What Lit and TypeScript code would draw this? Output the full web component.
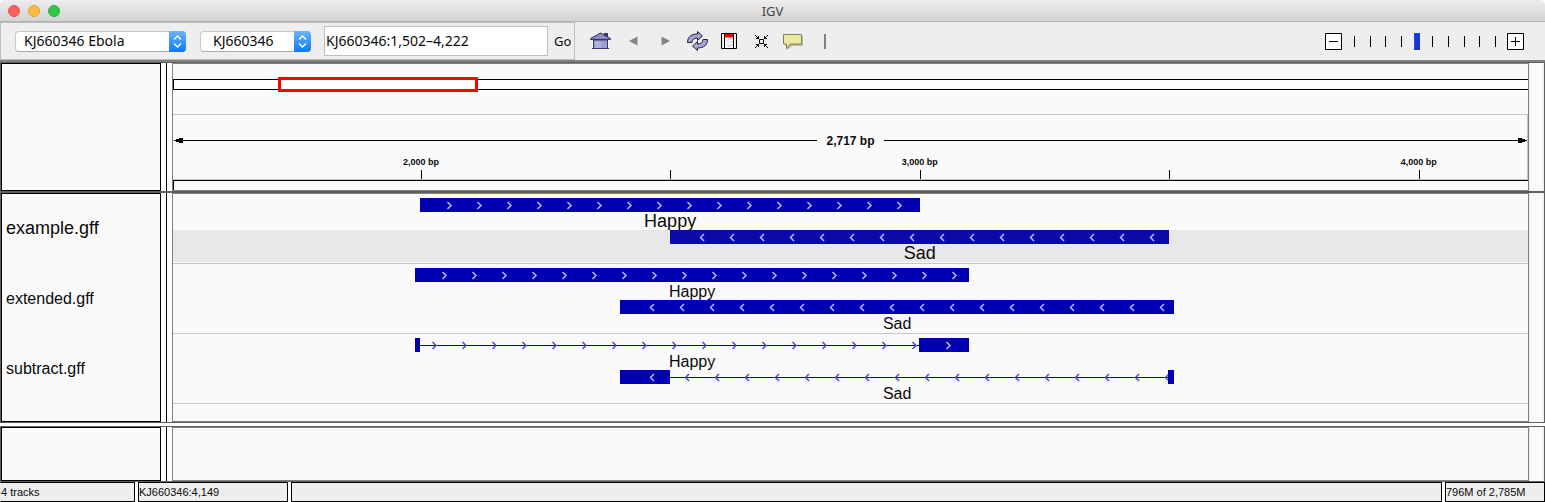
import { LitElement, html, css, svg } from "lit";
import { customElement, property } from "lit/decorators.js";
import { classMap } from "lit/directives/class-map.js";
import { styleMap } from "lit/directives/style-map.js";

const VIEW_START = 1503;
const VIEW_SPAN = 2716;

type Segment = { kind: "exon" | "intron"; start: number; end: number };
type Feature = { name: string; reverse: boolean; selected?: boolean; segments: Segment[] };
type Track = { name: string; large: boolean; features: Feature[] };

const TRACKS: Track[] = [
  {
    name: "example.gff",
    large: true,
    features: [
      { name: "Happy", reverse: false, segments: [{ kind: "exon", start: 1999, end: 3000 }] },
      { name: "Sad", reverse: true, selected: true, segments: [{ kind: "exon", start: 2500, end: 3500 }] },
    ],
  },
  {
    name: "extended.gff",
    large: false,
    features: [
      { name: "Happy", reverse: false, segments: [{ kind: "exon", start: 1988, end: 3099 }] },
      { name: "Sad", reverse: true, segments: [{ kind: "exon", start: 2399, end: 3510 }] },
    ],
  },
  {
    name: "subtract.gff",
    large: false,
    features: [
      {
        name: "Happy",
        reverse: false,
        segments: [
          { kind: "exon", start: 1988, end: 1999 },
          { kind: "intron", start: 1999, end: 2998 },
          { kind: "exon", start: 2998, end: 3099 },
        ],
      },
      {
        name: "Sad",
        reverse: true,
        segments: [
          { kind: "exon", start: 2399, end: 2500 },
          { kind: "intron", start: 2500, end: 3498 },
          { kind: "exon", start: 3498, end: 3510 },
        ],
      },
    ],
  },
];

const TICKS = [
  { at: 2000, label: "2,000 bp" },
  { at: 2500, label: "" },
  { at: 3000, label: "3,000 bp" },
  { at: 3500, label: "" },
  { at: 4000, label: "4,000 bp" },
];

const percent = (bp: number) => `${((bp - VIEW_START) / VIEW_SPAN) * 100}%`;
const share = (part: number, whole: number) => `${(part / whole) * 100}%`;

/** One row of a track: exon bars, intron lines and the name under them. */
@customElement("igv-feature")
class IgvFeature extends LitElement {
  @property({ attribute: false }) feature!: Feature;
  @property({ type: Boolean }) large = false;

  static styles = css`
    :host { display: block; height: 32px; }
    .row { position: relative; height: 32px; }
    .row.selected { background: #e8e8e8; }
    .feature { position: absolute; top: 0; bottom: 0; }
    .bar { position: relative; height: 14px; }
    .segment { position: absolute; top: 0; height: 14px; }
    .exon { background: #0000b2; }
    .selected .exon { background: #0a0aa6; }
    .intron { background: linear-gradient(#0000b2, #0000b2) 0 7px / 100% 1px no-repeat; }
    .arrows { display: block; width: 100%; height: 14px; }
    .chevron { fill: none; stroke: #b9b9f0; stroke-width: 1.5; }
    .intron .chevron { stroke: #4646ff; }
    .name { text-align: center; font-size: 16px; line-height: 20px; white-space: nowrap; }
    .name.large { font-size: 18px; line-height: 18px; }
  `;

  render() {
    const { segments, reverse, selected, name } = this.feature;
    const start = segments[0].start;
    const end = segments[segments.length - 1].end;
    const span = end - start;
    return html`
      <div class=${classMap({ row: true, selected: !!selected })}>
        <div class="feature" style=${styleMap({ left: percent(start), width: share(span, VIEW_SPAN) })}>
          <div class="bar">
            ${segments.map((s, i) => {
              const inset = s.kind === "exon" ? 15 : 0;
              const points = reverse
                ? "19,4 15.5,7.5 19,11"
                : "12.5,4 16,7.5 12.5,11";
              return html`
                <div
                  class="segment ${s.kind}"
                  style=${styleMap({ left: share(s.start - start, span), width: share(s.end - s.start, span) })}
                >
                  <svg class="arrows" aria-hidden="true">
                    <pattern id="p${i}" x=${inset} y="0" width="30" height="14" patternUnits="userSpaceOnUse">
                      <polyline class="chevron" points=${points}></polyline>
                    </pattern>
                    <rect x=${inset} y="0" width="100%" height="14" fill="url(#p${i})"></rect>
                  </svg>
                </div>
              `;
            })}
          </div>
          <div class=${classMap({ name: true, large: this.large })}>${name}</div>
        </div>
      </div>
    `;
  }
}

/** Ideogram with the visible window, and the base-pair scale below it. */
@customElement("igv-ruler")
class IgvRuler extends LitElement {
  static styles = css`
    :host { display: block; padding-top: 15px; }
    .ideogram {
      position: relative; box-sizing: border-box; height: 11px; margin-bottom: 24px;
      border: 1px solid #000; border-right: 0; background: #fff;
    }
    .window {
      position: absolute; top: -3px; left: 7.7%; width: 14.75%; height: 15px;
      box-sizing: border-box; border: 3px solid #f00;
    }
    .scale { border: solid #c3c3d3; border-width: 1px 0; box-shadow: inset -1px 0 #c3c3d3; padding-top: 17px; }
    .span {
      display: flex; align-items: center; padding: 0 1px; margin-bottom: 6px;
      font-size: 12px; line-height: 15px; font-weight: bold;
    }
    .line { flex: 1; height: 1px; background: #000; }
    .head { width: 9px; height: 7px; }
    .length { padding: 2px 9px 0; }
    .ticks { position: relative; height: 24px; font-size: 9px; line-height: 14px; font-weight: bold; }
    .tick { position: absolute; top: 15px; width: 1px; height: 9px; background: #000; }
    .label { position: absolute; top: 0; transform: translateX(-50%); white-space: nowrap; }
    .sequence { box-sizing: border-box; height: 10px; border: solid #000; border-width: 1px 0 0 1px; }
  `;

  render() {
    return html`
      <div class="ideogram"><div class="window"></div></div>
      <div class="scale">
        <div class="span">
          <svg class="head" viewBox="0 0 9 7" aria-hidden="true"><path d="M0 3h2V2h3V1h4v5H5V5H2V4H0z" /></svg>
          <div class="line"></div>
          <span class="length">2,717 bp</span>
          <div class="line"></div>
          <svg class="head" viewBox="0 0 9 7" aria-hidden="true"><path d="M9 3H7V2H4V1H0v5h4V5h3V4h2z" /></svg>
        </div>
        <div class="ticks">
          ${TICKS.map(
            (t) => html`
              <span class="label" style=${styleMap({ left: percent(t.at) })}>${t.label}</span>
              <div class="tick" style=${styleMap({ left: percent(t.at) })}></div>
            `
          )}
        </div>
      </div>
      <div class="sequence"></div>
    `;
  }
}

const ICONS = {
  home: svg`
    <path d="M2 9h17v9H2z" fill="#fff" opacity=".7"/>
    <path d="M3.5 8h14v8.500h-14z" fill="#9c9ccf" stroke="#37376b"/>
    <path d="M5 9h6v7H5z" fill="#b0b0dc"/>
    <path d="M2 16.500h17" stroke="#37376b"/>
    <path d="M14 1h4v5h-4z" fill="#37376b"/>
    <path d="M.5 6.500 10.500 1l10 5.500V7.500H.5z" fill="#8080b4" stroke="#37376b"/>
    <path d="M5 5.500h11M8 3.500h5" stroke="#9c9ccc"/>`,
  refresh: svg`
    <g fill="#a3a3d6" stroke="#202048" stroke-linejoin="round">
      <path d="M.5 11.500C.5 6 4 3 10.500 3V.5l5 4.500-5 4.500V7C7 7 5.500 8.500 5 11.500z"/>
      <path d="M20.500 8.500C20.500 14 17 17 10.500 17v2.500L5.500 15l5-4.500V13c3.500 0 5-1.500 5.500-4.500z" />
    </g>`,
  region: svg`
    <path d="M.5.5h15v15H.5z" fill="#fff" stroke="#000"/>
    <path d="M4 1h9v3.500H4z" fill="#f00"/>
    <path d="M5 6h3v2H5zM9 8h3v2H9zM6 11h4v3H6z" fill="#d8dcff"/>
    <path d="M9 5h3v2H9zM5 9h3v1H5zM10 11h2v2h-2z" fill="#ffd6d6"/>
    <path d="M3.500 1v14M12.500 1v14" stroke="#000"/>
    <path d="M1.500 1v14M14.500 1v14" stroke="#e8e8e8"/>`,
  fit: svg`
    <g fill="none" stroke="#000">
      <path d="M4.500 4.500h4v4h-4z"/>
      <path d="M0 0l4 4M13 0 9 4M0 13l4-4M13 13 9 9"/>
      <path d="M1 3.500h2.500V1M12 3.500H9.500V1M1 9.500h2.500V12M12 9.500H9.500V12"/>
    </g>`,
  comment: svg`
    <path d="M2 3h18v10H9l-5 4v-4H2z" fill="#b5b5b5"/>
    <path d="M.5 1.500h18v9.500H7.500l-4 4.500V11H.5z" fill="#ebe8a4" stroke="#85854f"/>`,
};

@customElement("app-root")
class AppRoot extends LitElement {
  static styles = css`
    :host {
      display: flex; flex-direction: column; min-height: 100vh;
      background: #fff; color: #0a0a0a;
      font-family: "Liberation Sans", Arial, sans-serif;
    }
    button { padding: 0; border: 0; background: none; color: inherit; font: inherit; display: block; }
    svg { display: block; }

    .titlebar {
      display: grid; grid-template-columns: 1fr auto 1fr; align-items: center;
      height: 21px; padding: 0 8px; border-bottom: 1px solid #b1b1b1;
      border-radius: 5px 5px 0 0;
      background: linear-gradient(#ededed, #d3d3d3);
      font: 13px/20px "Noto Sans", sans-serif; color: #444;
    }
    .lights { display: flex; gap: 8px; }
    .light { box-sizing: border-box; width: 12px; height: 12px; border-radius: 50%; border: 1px solid; }
    .close { background: #fc605b; border-color: #e2514d; }
    .minimize { background: #fdbc40; border-color: #dfa03a; }
    .zoom { background: #34c84a; border-color: #2bae3b; }

    .toolbar {
      display: flex; align-items: stretch; height: 38px; background: #eee;
      border-bottom: 2px solid #808080;
      font-family: "Noto Sans", sans-serif; font-size: 14px;
    }
    .locus {
      display: flex; align-items: center; box-sizing: border-box;
      border: 1px solid #bdbdbd; padding: 0 3px 0 14px;
    }
    .combo { display: grid; margin-right: 14px; }
    .combo.genome { width: 171px; }
    .combo.chromosome { width: 111px; margin-right: 13px; }
    .combo select {
      grid-area: 1 / 1; appearance: none; box-sizing: border-box; width: 100%; height: 21px;
      margin: 0; padding: 0 20px 0 8px; border: 1px solid #c8c8c8; border-bottom-color: #aaa;
      border-radius: 4px; background: #fff; color: #0a0a0a; font: inherit; line-height: 18px;
    }
    .combo.chromosome select { padding-left: 12px; }
    .combo svg { grid-area: 1 / 1; justify-self: end; pointer-events: none; }
    .position {
      box-sizing: border-box; width: 224px; height: 30px; margin: 0 6px 0 0; padding: 0 1px 2px;
      border: 1px solid #c0c0c0; background: #fff; color: #0a0a0a; font: inherit;
    }
    .go { font-size: 13px; line-height: 20px; }
    .tools { display: flex; align-items: center; flex: 1; padding-left: 15px; }
    .tool { display: flex; justify-content: center; width: 32px; }
    .tool.home { width: 21px; margin-right: 6px; }
    .rule { width: 2px; height: 15px; margin-left: 15px; background: #808080; }
    .zoomer { display: flex; align-items: center; gap: 9px; padding-right: 21px; }
    .scale { display: grid; width: 147px; }
    .marks { grid-area: 1 / 1; display: flex; justify-content: space-between; align-items: center; padding: 0 2px 0 3px; }
    .mark { width: 1px; height: 11px; background: #000; }
    .range { grid-area: 1 / 1; appearance: none; width: 100%; height: 17px; margin: 0; background: none; }
    .range::-webkit-slider-thumb {
      appearance: none; width: 6px; height: 17px; background: #1c34d4;
      border: solid #2347ff; border-width: 1px 0 0 1px;
    }
    .range::-moz-range-thumb { width: 6px; height: 17px; border: 0; border-radius: 0; background: #1c34d4; }

    .panel {
      display: grid; grid-template-columns: 160px 11px minmax(0, 1fr) 15px;
      border: solid #606060; border-width: 0 1px;
    }
    .panel.header { border-top-width: 1px; border-bottom-width: 2px; }
    .panel.features { border-bottom-width: 1px; margin-bottom: 3px; }
    .panel.annotation { flex: 1; min-height: 54px; border-top-width: 1px; border-bottom-width: 1px; }
    .names { border: 1px solid #000; background: #fafafa; }
    .divider { width: 1px; margin: 0 5px; background: #000; }
    .data { border: 1px solid #808080; background: #fafafa; }
    .scroll { background: #fafafa; border: solid #ececec; border-width: 0 1px; }
    .features .names, .features .data { padding-bottom: 17px; }
    .name { height: 70px; padding-left: 4px; font-size: 16px; line-height: 70px; }
    .name.large { font-size: 18px; line-height: 68px; }
    .track { padding: 4px 0 1px; border-bottom: 1px solid #c6c6d2; }

    .status { display: grid; grid-template-columns: 135px 150px 1fr 100px; gap: 3px; font-size: 11px; line-height: 18px; }
    .cell { height: 18px; border: 1px solid #000; background: #eee; white-space: nowrap; }
    .cell.first { border-left-color: #eee; }
  `;

  private combo(kind: string, label: string, value: string) {
    return html`
      <div class="combo ${kind}">
        <select aria-label=${label}><option>${value}</option></select>
        <svg width="17" height="21" viewBox="0 0 17 21" aria-hidden="true">
          <defs>
            <linearGradient id="blue" x1="0" y1="0" x2="0" y2="1">
              <stop offset="0" stop-color="#6cb3fa" />
              <stop offset="1" stop-color="#0a7aff" />
            </linearGradient>
          </defs>
          <path d="M0 0h13a4 4 0 0 1 4 4v13a4 4 0 0 1-4 4H0z" fill="url(#blue)" />
          <path d="M5 8.500 8.500 5 12 8.500M5 12.500 8.500 16 12 12.500" fill="none" stroke="#fff" stroke-width="1.500" />
        </svg>
      </div>
    `;
  }

  private panel(kind: string, names: unknown, data: unknown) {
    return html`
      <section class="panel ${kind}">
        <div class="names">${names}</div>
        <div class="divider"></div>
        <div class="data">${data}</div>
        <div class="scroll"></div>
      </section>
    `;
  }

  render() {
    return html`
      <header class="titlebar">
        <div class="lights">
          <button class="light close" aria-label="Close"></button>
          <button class="light minimize" aria-label="Minimize"></button>
          <button class="light zoom" aria-label="Zoom"></button>
        </div>
        <span>IGV</span>
      </header>

      <nav class="toolbar">
        <div class="locus">
          ${this.combo("genome", "Genome", "KJ660346 Ebola")}
          ${this.combo("chromosome", "Chromosome", "KJ660346")}
          <input class="position" type="text" aria-label="Locus" value="KJ660346:1,502–4,222" />
          <button class="go">Go</button>
        </div>
        <div class="tools">
          <button class="tool home" aria-label="Home">
            <svg width="21" height="18" viewBox="0 0 21 18">${ICONS.home}</svg>
          </button>
          <button class="tool" aria-label="Back">
            <svg width="9" height="10" viewBox="0 0 9 10"><path d="M0 5 8.500.5v9z" fill="#858585" /></svg>
          </button>
          <button class="tool" aria-label="Forward">
            <svg width="9" height="10" viewBox="0 0 9 10"><path d="M9 5 .5.5v9z" fill="#858585" /></svg>
          </button>
          <button class="tool" aria-label="Refresh">
            <svg width="21" height="20" viewBox="0 0 21 20">${ICONS.refresh}</svg>
          </button>
          <button class="tool" aria-label="Define region of interest">
            <svg width="16" height="16" viewBox="0 0 16 16">${ICONS.region}</svg>
          </button>
          <button class="tool" aria-label="Fit to window">
            <svg width="13" height="13" viewBox="0 0 13 13">${ICONS.fit}</svg>
          </button>
          <button class="tool" aria-label="Details">
            <svg width="20" height="17" viewBox="0 0 20 17">${ICONS.comment}</svg>
          </button>
          <div class="rule"></div>
        </div>
        <div class="zoomer">
          <button aria-label="Zoom out">
            <svg width="17" height="17" viewBox="0 0 17 17">
              <path d="M.5.5h16v16H.5z" fill="#fff" stroke="#000" /><path d="M4 8.500h9" stroke="#000" />
            </svg>
          </button>
          <div class="scale">
            <div class="marks">${Array.from({ length: 10 }, () => html`<div class="mark"></div>`)}</div>
            <input class="range" type="range" aria-label="Zoom level" min="0" max="9" value="4" />
          </div>
          <button aria-label="Zoom in">
            <svg width="17" height="17" viewBox="0 0 17 17">
              <path d="M.5.5h16v16H.5z" fill="#fff" stroke="#000" /><path d="M4 8.500h9M8.500 4v9" stroke="#000" />
            </svg>
          </button>
        </div>
      </nav>

      ${this.panel("header", "", html`<igv-ruler></igv-ruler>`)}
      ${this.panel(
        "features",
        TRACKS.map((t) => html`<div class=${classMap({ name: true, large: t.large })}>${t.name}</div>`),
        TRACKS.map(
          (t) => html`
            <div class="track">
              ${t.features.map((f) => html`<igv-feature .feature=${f} ?large=${t.large}></igv-feature>`)}
            </div>
          `
        )
      )}
      ${this.panel("annotation", "", "")}

      <footer class="status">
        <div class="cell first">4 tracks</div>
        <div class="cell">KJ660346:4,149</div>
        <div class="cell"></div>
        <div class="cell">796M of 2,785M</div>
      </footer>
    `;
  }
}
